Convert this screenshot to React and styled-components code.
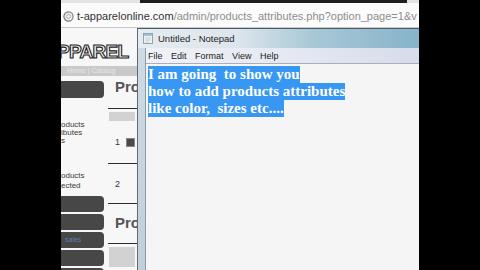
import styled, { createGlobalStyle } from "styled-components";

const Global = createGlobalStyle`
  html, body {
    margin: 0;
    padding: 0;
    background: #000;
    overflow: hidden;
  }
`;

const Frame = styled.div`
  width: 480px;
  height: 270px;
  display: flex;
  background: #000;
`;

const Letterbox = styled.div`
  width: 61px;
  flex-shrink: 0;
  background: #000;
`;

const Screen = styled.div`
  width: 358px;
  flex-shrink: 0;
  display: flex;
  flex-direction: column;
  background: #f1f1f1;
  overflow: hidden;
`;

const TabEdge = styled.div`
  height: 3px;
  flex-shrink: 0;
  display: flex;
  background: #e4e4e4;
  &::before {
    content: "";
    margin-left: 79px;
    width: 267px;
    background: #1e1e1e;
  }
`;

const AddressBar = styled.div`
  height: 22px;
  flex-shrink: 0;
  padding-top: 2px;
  display: flex;
  align-items: center;
  padding-left: 2px;
  background: #fbfbfb;
  border-bottom: 1px solid #c9c9c9;
  font-family: "Liberation Sans", Arial, sans-serif;
  font-size: 11px;
  white-space: nowrap;
  overflow: hidden;
`;

const GlobeSlot = styled.span`
  flex: 0 0 11px;
  width: 11px;
  height: 11px;
  margin-right: 3px;
  display: flex;
`;

const Url = styled.span`
  flex: 0 0 auto;
`;

const Host = styled.span`
  color: #333;
`;

const Path = styled.span`
  color: #8d8d8d;
`;

const Desktop = styled.div`
  flex: 1;
  display: flex;
  min-height: 0;
`;

const WebPage = styled.div`
  width: 76px;
  flex-shrink: 0;
  display: flex;
  flex-direction: column;
  background: #f7f7f7;
  overflow: hidden;
  font-family: "Liberation Sans", Arial, sans-serif;
  & > * {
    flex-shrink: 0;
  }
`;

const Logo = styled.div`
  margin: 14px 0 0 -4px;
  height: 19px;
  font-weight: 900;
  font-size: 19px;
  line-height: 19px;
  letter-spacing: -0.7px;
  color: #f2f2f2;
  -webkit-text-stroke: 1.1px #1b1b1b;
  white-space: nowrap;
`;

const NavStrip = styled.div`
  margin-top: 5px;
  height: 10px;
  background: #c9c9c9;
  font-size: 7px;
  line-height: 10px;
  color: #e6e6e6;
  padding-left: 6px;
  white-space: nowrap;
  overflow: hidden;
`;

const Body = styled.div`
  display: flex;
  gap: 4px;
  padding-top: 3px;
`;

const SideColumn = styled.div`
  width: 43px;
  display: flex;
  flex-direction: column;
  & > * {
    flex-shrink: 0;
  }
`;

const SideButton = styled.div`
  height: ${(p) => p.$h || 16}px;
  margin-top: ${(p) => p.$top || 0}px;
  margin-bottom: 2px;
  background: #474747;
  border-radius: 0 4px 4px 0;
  color: #5a7fa8;
  font-size: 7px;
  line-height: 16px;
  padding-left: 4px;
`;

const SideText = styled.div`
  height: ${(p) => p.$h || 8}px;
  font-size: 8px;
  line-height: ${(p) => p.$h || 8}px;
  color: #3a3a3a;
  white-space: nowrap;
  margin-top: ${(p) => p.$top || 0}px;
`;

const MainColumn = styled.div`
  flex: 1;
  display: flex;
  flex-direction: column;
  overflow: hidden;
  & > * {
    flex-shrink: 0;
  }
`;

const Heading = styled.div`
  height: 16px;
  padding-left: 7px;
  margin-top: ${(p) => p.$top || 0}px;
  font-size: 15px;
  font-weight: 600;
  line-height: 16px;
  color: #555;
  white-space: nowrap;
`;

const Rule = styled.div`
  height: 1px;
  background: #2b2b2b;
  margin-top: ${(p) => p.$top || 0}px;
`;

const GreyBox = styled.div`
  height: ${(p) => p.$h}px;
  margin: 3px 2px 0 1px;
  background: #d2d2d2;
`;

const Row = styled.div`
  height: ${(p) => p.$h}px;
  display: flex;
  align-items: center;
  gap: 6px;
  padding-left: 7px;
  font-size: 9px;
  color: #333;
`;

const RowIcon = styled.div`
  width: 7px;
  height: 7px;
  background: #4a4a4a;
  border: 1px solid #888;
`;

const Notepad = styled.div`
  flex: 1;
  display: flex;
  flex-direction: column;
  background: linear-gradient(180deg, #cfdce6, #bfcfdb);
  border-left: 1px solid #5d6b78;
  border-top: 1px solid #4c5a67;
  font-family: "Liberation Sans", Arial, sans-serif;
`;

const TitleBar = styled.div`
  height: 19px;
  flex-shrink: 0;
  display: flex;
  align-items: center;
  gap: 5px;
  padding-left: 5px;
  background: linear-gradient(
    90deg,
    #e5ebef 0%,
    #dde6ec 35%,
    #a8c8d6 62%,
    #86b4c9 100%
  );
  font-size: 9.5px;
  color: #1e1e1e;
`;

const Client = styled.div`
  flex: 1;
  display: flex;
  flex-direction: column;
  margin-left: 7px;
  border-left: 1px solid #8e9aa6;
`;

const MenuBar = styled.div`
  height: 15px;
  flex-shrink: 0;
  display: flex;
  align-items: center;
  gap: 8.5px;
  padding-left: 2px;
  background: linear-gradient(90deg, #f1f2f7 0%, #e6e9f2 50%, #d6dcea 100%);
  border-bottom: 1px solid #a5afc0;
  font-size: 9px;
  color: #1a1a1a;
`;

const EditArea = styled.div`
  flex: 1;
  background: #f5f5f5;
  padding: 2px 0 0 2px;
  font-family: "Liberation Serif", "Times New Roman", serif;
  font-weight: bold;
  font-size: 15px;
`;

const Selected = styled.div`
  width: fit-content;
  height: 17px;
  line-height: 17px;
  background: #3897f2;
  color: #fff;
  white-space: pre;
`;

const GlobeIcon = () => (
  <svg width="11" height="11" viewBox="0 0 11 11">
    <circle cx="5.5" cy="5.5" r="4.6" fill="#efefef" stroke="#7d7d7d" strokeWidth="1.2" />
    <circle cx="5.5" cy="5.5" r="2" fill="none" stroke="#a8a8a8" strokeWidth="0.9" />
  </svg>
);

const NotepadIcon = () => (
  <svg width="10" height="11" viewBox="0 0 10 11">
    <rect x="0.5" y="0.5" width="9" height="10" fill="#eef3f6" stroke="#8fa3b1" />
    <rect x="1" y="1" width="8" height="2" fill="#9cc3da" />
    <path d="M2 5h6M2 7h6M2 9h4" stroke="#b8c4cc" strokeWidth="0.8" />
  </svg>
);

const lines = [
  "I am going  to show you",
  "how to add products attributes",
  "like color,  sizes etc....",
];

export default function App() {
  return (
    <>
      <Global />
      <Frame>
        <Letterbox />
        <Screen>
          <TabEdge />
          <AddressBar>
            <GlobeSlot>
              <GlobeIcon />
            </GlobeSlot>
            <Url>
              <Host>t-apparelonline.com</Host>
              <Path>/admin/products_attributes.php?option_page=1&amp;v</Path>
            </Url>
          </AddressBar>
          <Desktop>
            <WebPage>
              <Logo>PPAREL</Logo>
              <NavStrip>Home | Catalog</NavStrip>
              <Body>
                <SideColumn>
                  <SideButton $top={2} $h={17} />
                  <SideText $top={21}>oducts</SideText>
                  <SideText>ibutes</SideText>
                  <SideText>s</SideText>
                  <SideText $top={26} $h={10}>oducts</SideText>
                  <SideText $h={10}>ected</SideText>
                  <SideButton $top={5} />
                  <SideButton />
                  <SideButton>sales</SideButton>
                  <SideButton />
                  <SideButton />
                </SideColumn>
                <MainColumn>
                  <Heading>Pro</Heading>
                  <Rule $top={13} />
                  <GreyBox $h={9} />
                  <Row $h={42}>
                    1<RowIcon />
                  </Row>
                  <Rule />
                  <Row $h={39}>2</Row>
                  <Rule />
                  <Heading $top={11}>Pro</Heading>
                  <Rule $top={12} />
                  <GreyBox $h={20} />
                </MainColumn>
              </Body>
            </WebPage>
            <Notepad>
              <TitleBar>
                <NotepadIcon />
                Untitled - Notepad
              </TitleBar>
              <Client>
                <MenuBar>
                  <span>File</span>
                  <span>Edit</span>
                  <span>Format</span>
                  <span>View</span>
                  <span>Help</span>
                </MenuBar>
                <EditArea>
                  {lines.map((l) => (
                    <Selected key={l}>{l}</Selected>
                  ))}
                </EditArea>
              </Client>
            </Notepad>
          </Desktop>
        </Screen>
        <Letterbox />
      </Frame>
    </>
  );
}
